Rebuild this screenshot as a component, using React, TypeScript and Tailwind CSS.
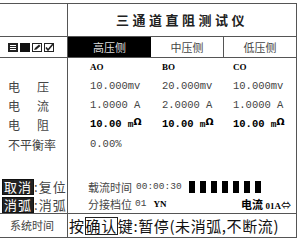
import React from "react";

const cjk = { fontFamily: '"Noto Sans CJK SC", "Noto Sans", sans-serif' };
const mono = { fontFamily: '"Liberation Mono", "Noto Sans CJK SC", monospace' };
const serif = { fontFamily: '"Liberation Serif", serif' };

function Icons() {
  return (
    <div className="flex items-center gap-[2px] pl-[8px]">
      <svg width="10" height="9" viewBox="0 0 10 9">
        <rect x="0" y="0" width="10" height="9" fill="#222" />
        <rect x="2" y="2" width="6" height="1" fill="#fff" />
        <rect x="2" y="4" width="6" height="1" fill="#fff" />
        <rect x="2" y="6" width="6" height="1" fill="#fff" />
      </svg>
      <svg width="10" height="9" viewBox="0 0 10 9">
        <rect x="0" y="0" width="10" height="9" fill="#111" />
      </svg>
      <svg width="10" height="9" viewBox="0 0 10 9">
        <rect x="0.5" y="0.5" width="9" height="8" fill="#fff" stroke="#222" />
        <path d="M2 7 L3 5 L7 1.5 L8.5 3 L4.5 6.5 Z" fill="#222" />
      </svg>
      <svg width="10" height="9" viewBox="0 0 10 9">
        <rect x="0.5" y="0.5" width="9" height="8" fill="#fff" stroke="#222" />
        <path d="M2 4.5 L4 7 L9 1" fill="none" stroke="#222" strokeWidth="1.6" />
      </svg>
    </div>
  );
}

function Ohm({ v }: { v: string }) {
  return (
    <span className="font-bold text-[10.5px] text-black whitespace-nowrap" style={mono}>
      {v} <span className="text-[9.5px]">m</span>
      <span className="relative top-[-2px] text-[9.5px]" style={{ fontFamily: '"DejaVu Sans", sans-serif' }}>Ω</span>
    </span>
  );
}

export default function App() {
  const label = "flex items-center text-[12px] text-[#444]";
  const valRow = "grid grid-cols-[72px_71px_1fr] pl-[22px] h-[19px] items-center text-[10.5px] text-[#444]";
  return (
    <div className="w-[300px] h-[242px] bg-white pt-[3px]" style={cjk}>
      <div className="w-[297px] border-t border-r border-b border-[#555]">
        {/* title */}
        <div className="grid grid-cols-[68px_1fr] h-[33px] border-b border-[#555]">
          <div className="border-r border-[#555]" />
          <div className="flex items-center justify-center font-bold text-[13px] tracking-[3.5px] text-[#222]">
            三通道直阻测试仪
          </div>
        </div>
        {/* tabs */}
        <div className="grid grid-cols-[68px_83px_73px_1fr] h-[21px] border-b border-[#555]">
          <div className="flex items-center border-r border-[#555]">
            <Icons />
          </div>
          <div className="flex items-center justify-center bg-black text-[11px] text-[#ddd]">高压侧</div>
          <div className="flex items-center justify-center border-r border-[#555] text-[11px] text-[#444]">中压侧</div>
          <div className="flex items-center justify-center text-[11px] text-[#444]">低压侧</div>
        </div>
        {/* body */}
        <div className="grid grid-cols-[68px_1fr] h-[156px] border-b border-[#555]">
          <div className="flex flex-col border-r border-[#555]">
            <div className="h-[19px]" />
            <div className={`${label} h-[19px] pl-[8px] gap-[17px]`}><span>电</span><span>压</span></div>
            <div className={`${label} h-[19px] pl-[8px] gap-[17px]`}><span>电</span><span>流</span></div>
            <div className={`${label} h-[19px] pl-[8px] gap-[17px]`}><span>电</span><span>阻</span></div>
            <div className={`${label} h-[22px] pl-[8px]`}>不平衡率</div>
            <div className="h-[22px]" />
            <div className={`${label} h-[18px] pl-[2px] text-[13px]`}>
              <span className="bg-[#222] text-white border border-[#111] leading-[14px] px-[1px] tracking-[1px]">取消</span>
              <span className="tracking-[1px]">:复位</span>
            </div>
            <div className={`${label} h-[17px] pl-[2px] text-[13px]`}>
              <span className="bg-[#222] text-white border border-[#111] leading-[14px] px-[1px] tracking-[1px]">消弧</span>
              <span className="tracking-[1px]">:消弧</span>
            </div>
          </div>
          <div className="flex flex-col">
            <div className="grid grid-cols-[72px_71px_1fr] pl-[22px] h-[19px] items-center text-[9px] font-bold text-black" style={serif}>
              <span>AO</span><span>BO</span><span>CO</span>
            </div>
            <div className={valRow} style={mono}>
              <span>10.000mv</span><span>20.000mv</span><span>10.000mv</span>
            </div>
            <div className={valRow} style={mono}>
              <span>1.0000 A</span><span>2.0000 A</span><span>1.0000 A</span>
            </div>
            <div className="grid grid-cols-[72px_71px_1fr] pl-[22px] h-[19px] items-center">
              <Ohm v="10.00" /><Ohm v="10.00" /><Ohm v="10.00" />
            </div>
            <div className="flex items-center pl-[22px] h-[22px] text-[10.5px] text-[#444]" style={mono}>0.00%</div>
            <div className="h-[22px]" />
            <div className="flex items-center pl-[20px] h-[18px] text-[11px] text-[#444]">
              <span>载流时间</span>
              <span className="ml-[4px] text-[9.5px]" style={mono}>00:00:30</span>
              <div className="flex gap-[5px] ml-[7px]">
                {[0, 1, 2, 3, 4, 5, 6].map((i) => (
                  <div key={i} className="w-[6px] h-[12px] bg-black" />
                ))}
              </div>
            </div>
            <div className="flex items-center pl-[20px] pr-[5px] h-[17px] text-[11px] text-[#444]">
              <span>分接档位</span>
              <span className="ml-[3px] text-[9.5px]" style={mono}>01</span>
              <span className="ml-[7px] text-[9px] font-bold text-black" style={serif}>YN</span>
              <span className="ml-auto font-bold text-black text-[11px] whitespace-nowrap">
                电流 <span className="text-[9px]" style={serif}>01A</span>
                <span className="text-[10px] font-normal">⇔</span>
              </span>
            </div>
          </div>
        </div>
        {/* bottom */}
        <div className="grid grid-cols-[68px_1fr] h-[23px]">
          <div className="flex items-center pl-[10px] border-r border-[#555] text-[11px] text-[#444]">系统时间</div>
          <div className="flex items-center pl-[1px] text-[15px] leading-none text-[#111] whitespace-nowrap tracking-[0.6px]">
            <span>按</span>
            <span className="border border-[#222] leading-[16px]">确认</span>
            <span>键:暂停(未消弧,不断流)</span>
          </div>
        </div>
      </div>
    </div>
  );
}
